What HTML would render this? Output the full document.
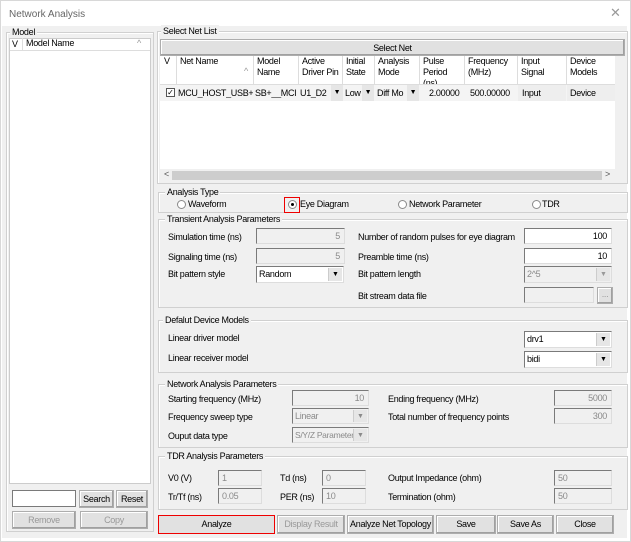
<!DOCTYPE html>
<html><head><style>
*{box-sizing:border-box;margin:0;padding:0}
body{width:631px;height:542px;background:#e8ece4;font-family:"Liberation Sans",sans-serif;font-size:9px;letter-spacing:-0.3px;color:#000;position:relative;overflow:hidden}
.a{position:absolute;white-space:nowrap}
.g{position:absolute;border:1px solid #d0d0d0;box-shadow:inset 1px 1px 0 #fff}
.gl{position:absolute;background:#f0f0f0;padding:0 2px;top:-7px;left:6px;line-height:12px;white-space:nowrap}
.in{position:absolute;background:#fff;border:1px solid #7a7a7a;border-right-color:#ddd;border-bottom-color:#ddd;text-align:right;padding-right:4px;line-height:14px;white-space:nowrap;overflow:hidden}
.dis{background:#f0f0f0;color:#8a8a8a}
.btn{position:absolute;background:#e1e1e1;border:1px solid #adadad;box-shadow:inset -1px -1px 0 #a0a0a0,inset 1px 1px 0 #fff;text-align:center;line-height:16px;white-space:nowrap;overflow:hidden}
.dd{position:absolute;right:1px;top:1px;bottom:1px;width:14px;background:#e6e6e6;border-left:1px solid #ccc;font-size:7px;text-align:center;line-height:14px;letter-spacing:0}
.hd{position:absolute;top:56px;height:28px;border-right:1px solid #ddd;padding-left:3px;line-height:11px;overflow:hidden;white-space:nowrap}
.r{position:absolute;width:9px;height:9px;border:1px solid #8a8a8a;border-radius:50%;background:#fff}
.c{overflow:hidden}
</style></head><body>
<div class="a" style="left:0;top:0;width:631px;height:542px;background:#fff;border:1px solid #d8d8d8"></div>
<div class="a" style="left:9px;top:9px;font-size:10px;color:#666;letter-spacing:0">Network Analysis</div>
<div class="a" style="left:610px;top:5px;font-size:13px;color:#999;letter-spacing:0">✕</div>
<div class="a" style="left:2px;top:26px;width:625px;height:512px;background:#f0f0f0"></div>

<!-- Model -->
<div class="g" style="left:6px;top:32px;width:148px;height:500px"><div class="gl" style="left:3px">Model</div></div>
<div class="a" style="left:9px;top:38px;width:142px;height:446px;background:#fff;border:1px solid #ccc"></div>
<div class="a" style="left:10px;top:39px;width:140px;height:12px;border-bottom:1px solid #ddd"></div>
<div class="a" style="left:12px;top:39px">V</div>
<div class="a" style="left:22px;top:38px;height:13px;border-left:1px solid #ddd;padding-left:3px">Model Name</div>
<div class="a" style="left:137px;top:38px;color:#999">^</div>
<div class="a" style="left:12px;top:490px;width:64px;height:17px;background:#fff;border:1px solid #7a7a7a"></div>
<div class="btn" style="left:79px;top:490px;width:35px;height:18px">Search</div>
<div class="btn" style="left:116px;top:490px;width:32px;height:18px">Reset</div>
<div class="btn" style="left:12px;top:511px;width:64px;height:18px;color:#999">Remove</div>
<div class="btn" style="left:80px;top:511px;width:68px;height:18px;color:#999">Copy</div>

<!-- Select Net List -->
<div class="g" style="left:157px;top:31px;width:471px;height:153px"><div class="gl" style="left:3px">Select Net List</div></div>
<div class="btn" style="left:160px;top:39px;width:465px;height:17px">Select Net</div>
<div class="a" style="left:160px;top:56px;width:455px;height:126px;background:#fff"></div>
<div class="a" style="left:160px;top:56px;width:455px;height:29px;border-bottom:1px solid #ddd"></div>
<div class="hd" style="left:161px;width:16px">V</div>
<div class="hd" style="left:177px;width:77px">Net Name</div>
<div class="a" style="left:244px;top:66px;color:#999">^</div>
<div class="hd" style="left:254px;width:45px">Model<br>Name</div>
<div class="hd" style="left:299px;width:44px">Active<br>Driver Pin</div>
<div class="hd" style="left:343px;width:32px">Initial<br>State</div>
<div class="hd" style="left:375px;width:45px">Analysis<br>Mode</div>
<div class="hd" style="left:420px;width:45px">Pulse<br>Period<br>(ns)</div>
<div class="hd" style="left:465px;width:53px">Frequency<br>(MHz)</div>
<div class="hd" style="left:518px;width:49px">Input<br>Signal</div>
<div class="hd" style="left:567px;width:48px;border:none">Device<br>Models</div>
<div class="a" style="left:160px;top:85px;width:455px;height:16px;background:#f4f4f4"></div>
<div class="a" style="left:166px;top:88px;width:9px;height:9px;border:1px solid #555;font-size:8px;line-height:8px;text-align:center;background:#fff;letter-spacing:0">✓</div>
<div class="a c" style="left:178px;top:88px;width:75px">MCU_HOST_USB+</div>
<div class="a c" style="left:255px;top:88px;width:43px">SB+__MCI</div>
<div class="a c" style="left:300px;top:88px;width:30px">U1_D2</div>
<div class="a" style="left:331px;top:85px;width:12px;height:16px;background:#e6e6e6;font-size:7px;text-align:center;line-height:16px">▼</div>
<div class="a c" style="left:345px;top:88px;width:17px">Low</div>
<div class="a" style="left:362px;top:85px;width:12px;height:16px;background:#e6e6e6;font-size:7px;text-align:center;line-height:16px">▼</div>
<div class="a c" style="left:377px;top:88px;width:30px">Diff Mo</div>
<div class="a" style="left:407px;top:85px;width:12px;height:16px;background:#e6e6e6;font-size:7px;text-align:center;line-height:16px">▼</div>
<div class="a" style="left:429px;top:88px">2.00000</div>
<div class="a" style="left:470px;top:88px">500.00000</div>
<div class="a" style="left:518px;top:85px;width:48px;height:16px;background:#eee"></div>
<div class="a" style="left:522px;top:88px">Input</div>
<div class="a" style="left:567px;top:85px;width:48px;height:16px;background:#eee"></div>
<div class="a" style="left:570px;top:88px">Device</div>
<div class="a" style="left:160px;top:169px;width:455px;height:13px;background:#f0f0f0"></div>
<div class="a" style="left:172px;top:171px;width:430px;height:9px;background:#cdcdcd"></div>
<div class="a" style="left:164px;top:169px;color:#555">&lt;</div>
<div class="a" style="left:605px;top:169px;color:#555">&gt;</div>

<!-- Analysis Type -->
<div class="g" style="left:158px;top:192px;width:470px;height:21px"><div class="gl">Analysis Type</div></div>
<div class="r" style="left:177px;top:200px"></div><div class="a" style="left:188px;top:199px">Waveform</div>
<div class="a" style="left:284px;top:197px;width:16px;height:16px;border:1.5px solid #e00"></div>
<div class="r" style="left:288px;top:200px"><div class="a" style="left:2px;top:2px;width:3px;height:3px;background:#000;border-radius:50%"></div></div>
<div class="a" style="left:300px;top:199px">Eye Diagram</div>
<div class="r" style="left:398px;top:200px"></div><div class="a" style="left:409px;top:199px">Network Parameter</div>
<div class="r" style="left:532px;top:200px"></div><div class="a" style="left:542px;top:199px">TDR</div>

<!-- Transient -->
<div class="g" style="left:158px;top:219px;width:470px;height:89px"><div class="gl">Transient Analysis Parameters</div></div>
<div class="a" style="left:168px;top:232px">Simulation time (ns)</div>
<div class="in dis" style="left:256px;top:228px;width:89px;height:16px">5</div>
<div class="a" style="left:168px;top:252px">Signaling time (ns)</div>
<div class="in dis" style="left:256px;top:248px;width:89px;height:16px">5</div>
<div class="a" style="left:168px;top:269px">Bit pattern style</div>
<div class="in" style="left:256px;top:266px;width:88px;height:17px;text-align:left;padding-left:2px">Random<div class="dd">▼</div></div>
<div class="a" style="left:358px;top:232px">Number of random pulses for eye diagram</div>
<div class="in" style="left:524px;top:228px;width:88px;height:16px">100</div>
<div class="a" style="left:358px;top:252px">Preamble time (ns)</div>
<div class="in" style="left:524px;top:248px;width:88px;height:16px">10</div>
<div class="a" style="left:358px;top:269px">Bit pattern length</div>
<div class="in dis" style="left:524px;top:266px;width:88px;height:17px;text-align:left;padding-left:2px">2^5<div class="dd" style="color:#999">▼</div></div>
<div class="a" style="left:358px;top:291px">Bit stream data file</div>
<div class="in dis" style="left:524px;top:287px;width:70px;height:16px"></div>
<div class="btn" style="left:597px;top:287px;width:16px;height:17px;color:#999;line-height:12px">...</div>

<!-- Default Device -->
<div class="g" style="left:158px;top:320px;width:470px;height:53px"><div class="gl" style="left:4px">Defalut Device Models</div></div>
<div class="a" style="left:168px;top:333px">Linear driver model</div>
<div class="in" style="left:524px;top:331px;width:88px;height:17px;text-align:left;padding-left:2px">drv1<div class="dd">▼</div></div>
<div class="a" style="left:168px;top:353px">Linear receiver model</div>
<div class="in" style="left:524px;top:351px;width:88px;height:17px;text-align:left;padding-left:2px">bidi<div class="dd">▼</div></div>

<!-- Network Analysis -->
<div class="g" style="left:158px;top:384px;width:470px;height:64px"><div class="gl">Network Analysis Parameters</div></div>
<div class="a" style="left:168px;top:394px">Starting frequency (MHz)</div>
<div class="in dis" style="left:292px;top:390px;width:77px;height:16px">10</div>
<div class="a" style="left:168px;top:412px">Frequency sweep type</div>
<div class="in dis" style="left:292px;top:408px;width:77px;height:16px;text-align:left;padding-left:2px">Linear<div class="dd">▼</div></div>
<div class="a" style="left:168px;top:431px">Ouput data type</div>
<div class="in dis" style="left:292px;top:427px;width:77px;height:16px;text-align:left;padding-left:2px;font-size:8.5px">S/Y/Z Parameter<div class="dd">▼</div></div>
<div class="a" style="left:388px;top:394px">Ending frequency (MHz)</div>
<div class="in dis" style="left:554px;top:390px;width:58px;height:16px">5000</div>
<div class="a" style="left:388px;top:412px">Total number of frequency points</div>
<div class="in dis" style="left:554px;top:408px;width:58px;height:16px">300</div>

<!-- TDR -->
<div class="g" style="left:158px;top:456px;width:470px;height:54px"><div class="gl">TDR Analysis Parameters</div></div>
<div class="a" style="left:168px;top:473px">V0 (V)</div>
<div class="in dis" style="left:218px;top:470px;width:44px;height:16px;text-align:left;padding-left:3px">1</div>
<div class="a" style="left:168px;top:492px">Tr/Tf (ns)</div>
<div class="in dis" style="left:218px;top:488px;width:44px;height:16px;text-align:left;padding-left:3px">0.05</div>
<div class="a" style="left:280px;top:473px">Td (ns)</div>
<div class="in dis" style="left:322px;top:470px;width:44px;height:16px;text-align:left;padding-left:3px">0</div>
<div class="a" style="left:280px;top:492px">PER (ns)</div>
<div class="in dis" style="left:322px;top:488px;width:44px;height:16px;text-align:left;padding-left:3px">10</div>
<div class="a" style="left:388px;top:473px">Output Impedance (ohm)</div>
<div class="in dis" style="left:554px;top:470px;width:58px;height:16px;text-align:left;padding-left:3px">50</div>
<div class="a" style="left:388px;top:492px">Termination (ohm)</div>
<div class="in dis" style="left:554px;top:488px;width:58px;height:16px;text-align:left;padding-left:3px">50</div>

<!-- Buttons -->
<div class="btn" style="left:158px;top:515px;width:117px;height:19px;border:1.5px solid #e00;box-shadow:none">Analyze</div>
<div class="btn" style="left:277px;top:515px;width:68px;height:19px;color:#999">Display Result</div>
<div class="btn" style="left:347px;top:515px;width:87px;height:19px">Analyze Net Topology</div>
<div class="btn" style="left:436px;top:515px;width:60px;height:19px">Save</div>
<div class="btn" style="left:497px;top:515px;width:57px;height:19px">Save As</div>
<div class="btn" style="left:556px;top:515px;width:58px;height:19px">Close</div>
</body></html>
